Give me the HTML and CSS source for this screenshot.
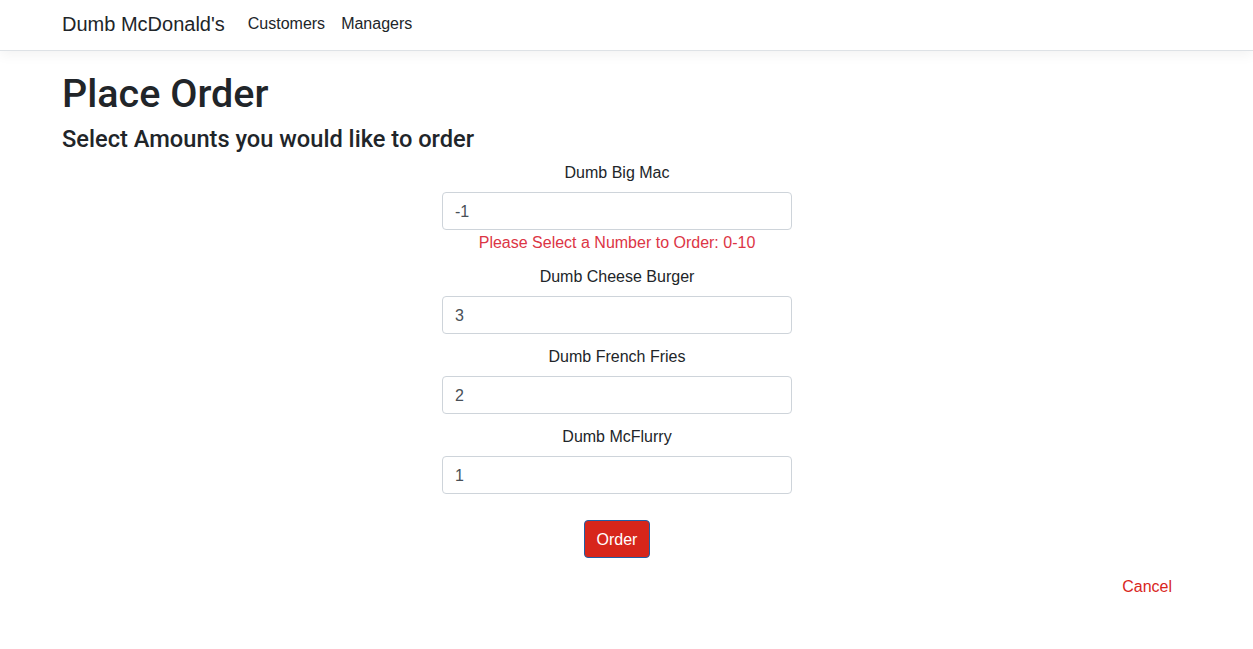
FILE: index.html
```html
<!DOCTYPE html>
<html lang="en">
<head>
<meta charset="utf-8">
<title>Place Order - Dumb McDonald's</title>
<link rel="stylesheet" href="styles.css">
</head>
<body>
<header class="navbar">
  <div class="container nav-inner">
    <a class="brand" href="#">Dumb McDonald's</a>
    <nav class="nav-links">
      <a class="nav-link" href="#">Customers</a>
      <a class="nav-link" href="#">Managers</a>
    </nav>
  </div>
</header>
<div class="page">
<main class="container">
  <h1 class="title">Place Order</h1>
  <h4 class="subtitle">Select Amounts you would like to order</h4>
  <form class="order-form">
    <div class="form-group">
      <label class="label">Dumb Big Mac</label>
      <input class="form-control" type="text" value="-1">
      <div class="error">Please Select a Number to Order: 0-10</div>
    </div>
    <div class="form-group">
      <label class="label">Dumb Cheese Burger</label>
      <input class="form-control" type="text" value="3">
    </div>
    <div class="form-group">
      <label class="label">Dumb French Fries</label>
      <input class="form-control" type="text" value="2">
    </div>
    <div class="form-group">
      <label class="label">Dumb McFlurry</label>
      <input class="form-control" type="text" value="1">
    </div>
    <button class="btn-order" type="button">Order</button>
  </form>
  <div class="cancel-row"><a class="cancel" href="#">Cancel</a></div>
</main>
</div>
</body>
</html>
```
FILE: styles.css
```css
* { box-sizing: border-box; }
html, body { margin: 0; padding: 0; }
body {
  font-family: "Liberation Sans", Arial, sans-serif;
  font-size: 16px;
  line-height: 1.5;
  color: #212529;
  background: #fff;
}
.container {
  max-width: 1140px;
  margin: 0 auto;
  padding: 0 15px;
}
.navbar {
  height: 51px;
  padding-right: 19px;
  border-bottom: 1px solid #dee2e6;
  box-shadow: 0 4px 12px rgba(0,0,0,.05);
  margin-bottom: 16px;
}
.page { padding-right: 19px; }
.nav-inner {
  display: flex;
  align-items: center;
  height: 48px;
}
.brand {
  font-size: 20px;
  line-height: 30px;
  color: #212529;
  text-decoration: none;
  margin-right: 15px;
}
.nav-links { display: flex; }
.nav-link {
  color: #212529;
  text-decoration: none;
  padding: 8px;
  font-size: 16px;
}
.title {
  font-family: Roboto, "Liberation Sans", Arial, sans-serif;
  font-size: 39.5px;
  font-weight: 500;
  line-height: 48px;
  padding-top: 3px;
  margin: 0 0 7px;
}
.subtitle {
  font-family: Roboto, "Liberation Sans", Arial, sans-serif;
  font-size: 23.65px;
  font-weight: 500;
  line-height: 29px;
  margin: 0 0 6px;
}
.order-form {
  display: flex;
  flex-direction: column;
  align-items: center;
}
.form-group {
  width: 350px;
  display: flex;
  flex-direction: column;
  align-items: center;
  margin-bottom: 10px;
}
.label {
  display: block;
  padding-top: 1px;
  margin-bottom: 7px;
  line-height: 24px;
}
.form-control {
  width: 100%;
  height: 38px;
  padding: 7px 12px 5px;
  font-family: inherit;
  font-size: 16px;
  line-height: 24px;
  color: #495057;
  border: 1px solid #ced4da;
  border-radius: 4px;
  background: #fff;
}
.error {
  color: #dc3545;
  padding-top: 1px;
  line-height: 23px;
}
.btn-order {
  margin-top: 16px;
  height: 38px;
  padding: 7px 12px 5px;
  font-family: inherit;
  font-size: 16px;
  line-height: 24px;
  color: #fff;
  background: #d7261b;
  border: 1px solid #1f5fa5;
  border-radius: 4px;
}
.cancel-row {
  display: flex;
  justify-content: flex-end;
  margin-top: 16px;
  padding-top: 1px;
}
.cancel {
  color: #d9261c;
  text-decoration: none;
  line-height: 24px;
}
```
